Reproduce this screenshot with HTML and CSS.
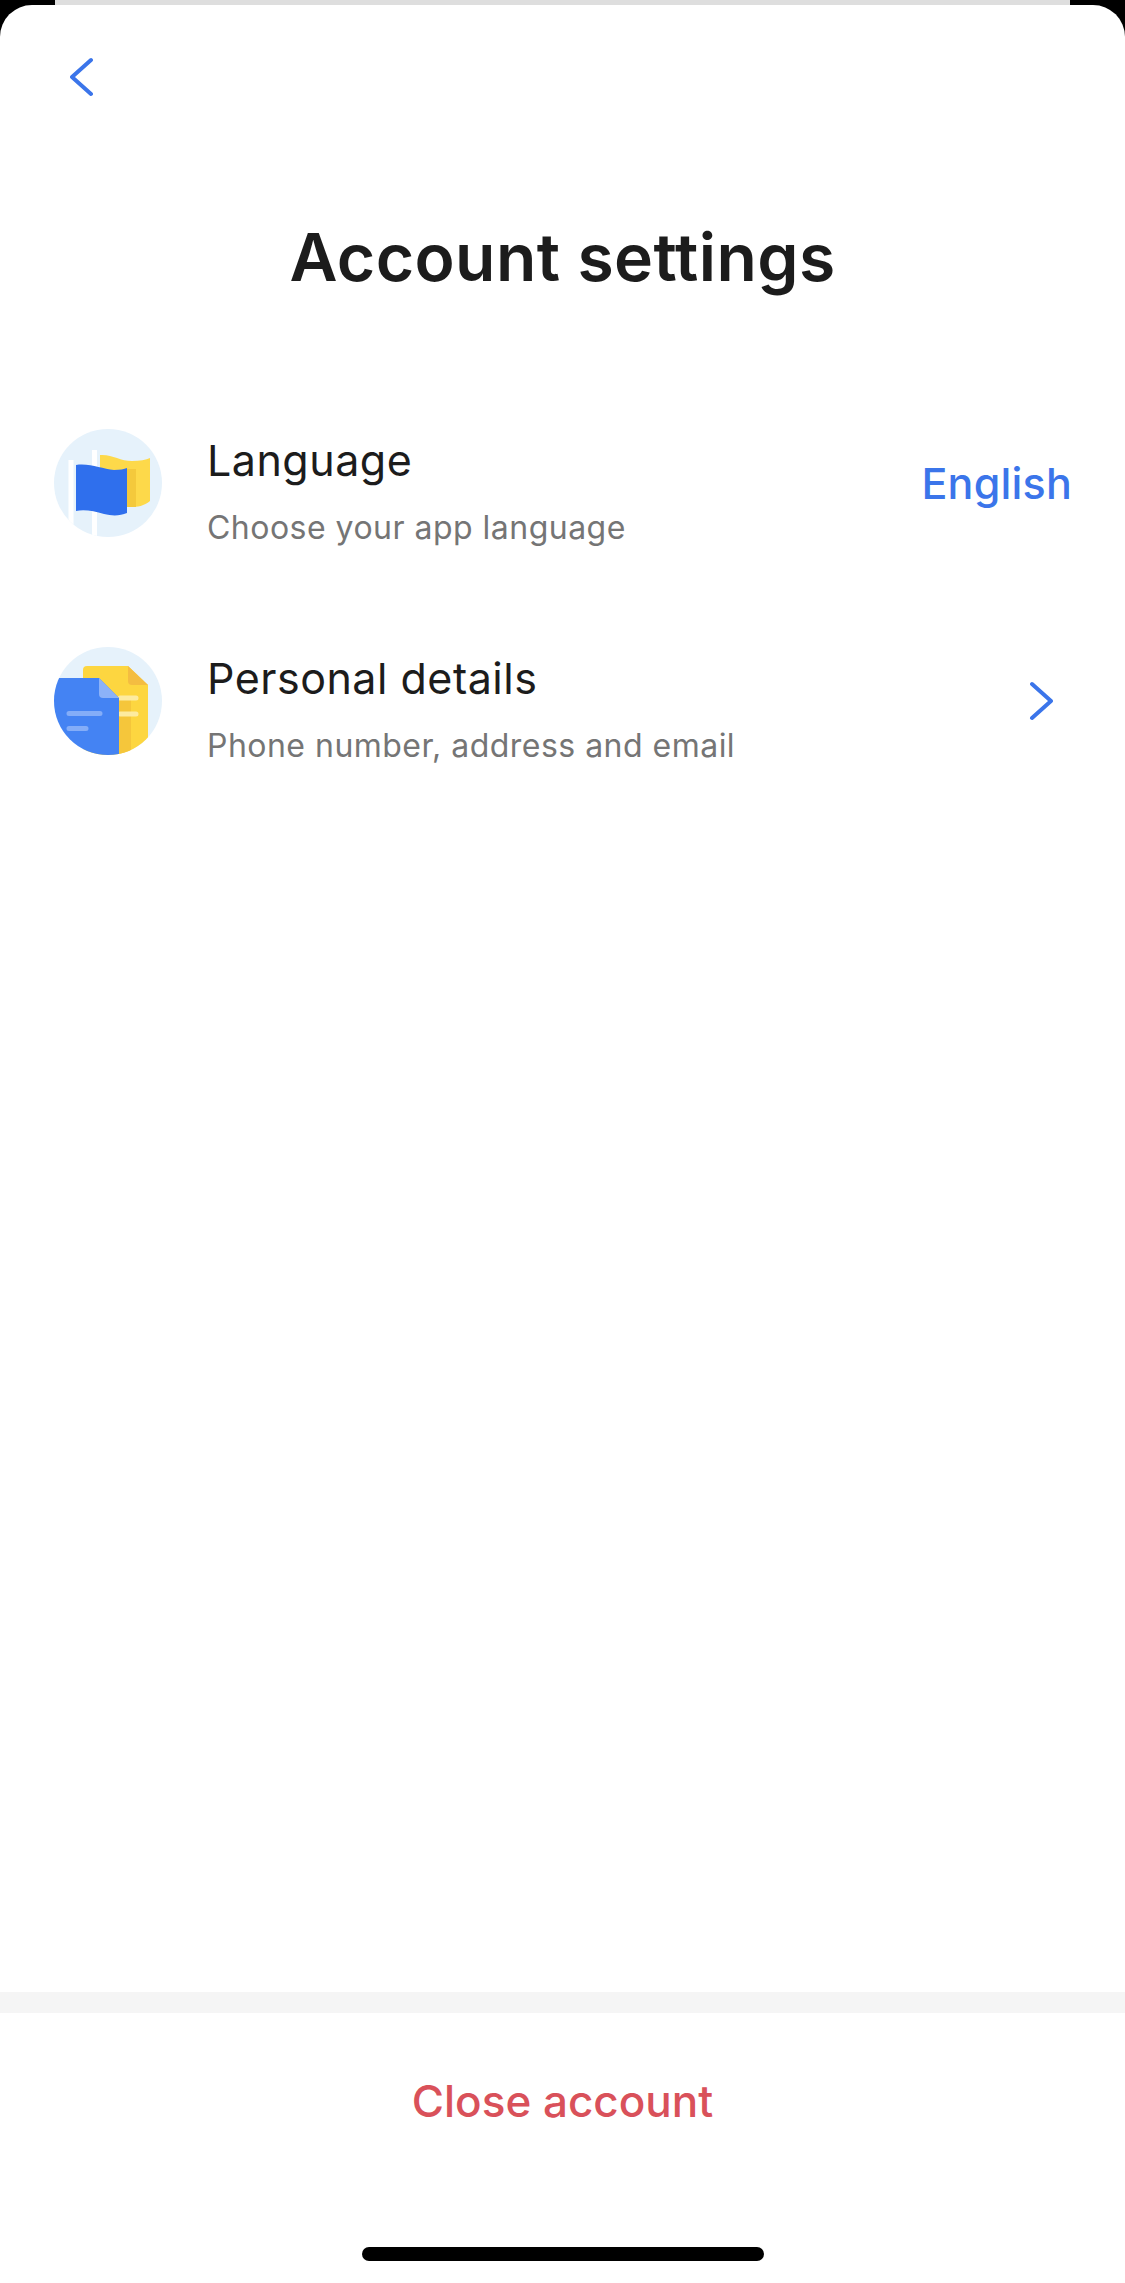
FILE: index.html
```html
<!DOCTYPE html>
<html lang="en">
<head>
<meta charset="utf-8">
<title>Account settings</title>
<link rel="stylesheet" href="styles.css">
</head>
<body>
<div class="screen">
  <div class="status-strip"></div>
  <main class="sheet">
    <header class="nav">
      <svg class="chevron-back" width="24" height="40" viewBox="0 0 24 40"><path d="M21 3 L2 20 L21 37" fill="none" stroke="#3b75ea" stroke-width="4" stroke-linecap="round" stroke-linejoin="round"/></svg>
    </header>
    <h1 class="title">Account settings</h1>
    <section class="list">
      <div class="row">
        <svg class="icon" width="108" height="108" viewBox="0 0 108 108">
          <defs><clipPath id="c1"><circle cx="54" cy="54" r="54"/></clipPath></defs>
          <circle cx="54" cy="54" r="54" fill="#e6f2fb"/>
          <g clip-path="url(#c1)">
            <rect x="14.5" y="31" width="5" height="77" fill="#fff"/>
            <rect x="38" y="21" width="5" height="87" fill="#fff"/>
            <path d="M46 26 C58 25 66 32 78 32 C86 32 92 31 96 29 V72 C90 77 84 78 76 78 L46 72 Z" fill="#fdd94a"/>
            <path d="M72 40 H82 V78 C78 78 75 78 72 78 Z" fill="#f4c93c"/>
            <path d="M22 36 C36 34 48 40 60 41 C66 41 70 40 73 39 V84 C66 87 58 87 50 85 C40 82 30 80 22 82 Z" fill="#2f6fed"/>
          </g>
        </svg>
        <div class="text">
          <div class="row-title">Language</div>
          <div class="row-sub">Choose your app language</div>
        </div>
        <div class="value">English</div>
      </div>
      <div class="row">
        <svg class="icon" width="108" height="108" viewBox="0 0 108 108">
          <defs><clipPath id="c2"><circle cx="54" cy="54" r="54"/></clipPath></defs>
          <circle cx="54" cy="54" r="54" fill="#e6f2fb"/>
          <g clip-path="url(#c2)">
            <path d="M33 19 H74 L94 38 V108 H29 V23 Q29 19 33 19 Z" fill="#fdd640"/>
            <path d="M74 19 L94 38 H78 Q74 38 74 34 Z" fill="#f4bd41"/>
            <rect x="65" y="50" width="12" height="58" fill="#f5c63b"/>
            <path d="M66 51 H82 M66 67 H82" stroke="#fdeba0" stroke-width="5" stroke-linecap="round"/>
            <path d="M-2 31 H45 L65 51 V108 H-2 Z" fill="#4483f3"/>
            <path d="M45 31 L65 51 H49 Q45 51 45 47 Z" fill="#8cb2f8"/>
            <path d="M15 66.5 H46 M15 81.5 H32" stroke="#84adf8" stroke-width="5" stroke-linecap="round"/>
          </g>
        </svg>
        <div class="text">
          <div class="row-title">Personal details</div>
          <div class="row-sub">Phone number, address and email</div>
        </div>
        <svg class="chevron-next" width="24" height="40" viewBox="0 0 24 40"><path d="M3 3 L22 20 L3 37" fill="none" stroke="#3b75ea" stroke-width="4" stroke-linecap="round" stroke-linejoin="round"/></svg>
      </div>
    </section>
    <div class="spacer"></div>
    <div class="band"></div>
    <footer class="footer">
      <div class="close">Close account</div>
      <div class="home-bar"></div>
    </footer>
  </main>
</div>
</body>
</html>
```

FILE: styles.css
```css
html, body {
  margin: 0;
  padding: 0;
  background: #000;
}
.screen {
  width: 1125px;
  height: 2283px;
  display: flex;
  flex-direction: column;
  background: #000;
  font-family: Inter, "Liberation Sans", sans-serif;
  overflow: hidden;
}
.status-strip {
  height: 5px;
  margin: 0 55px;
  background: #dedede;
  flex: none;
}
.sheet {
  flex: 1;
  display: flex;
  flex-direction: column;
  background: #fff;
  border-radius: 32px 32px 0 0;
}
.nav {
  height: 212px;
  padding: 52px 0 0 70px;
  box-sizing: border-box;
  flex: none;
}
.chevron-back { display: block; }
.title {
  margin: 0;
  height: 80px;
  line-height: 80px;
  text-align: center;
  font-size: 66px;
  font-weight: 600;
  color: #1c1c1c;
  letter-spacing: 0.4px;
}
.list {
  margin-top: 132px;
  display: flex;
  flex-direction: column;
  gap: 110px;
}
.row {
  display: flex;
  align-items: center;
  height: 108px;
  padding-left: 54px;
}
.icon { flex: none; }
.text {
  flex: 1;
  margin-left: 45px;
  padding-top: 15px;
}
.row-title {
  font-size: 43px;
  line-height: 50px;
  letter-spacing: 0.5px;
  color: #1c1c1c;
}
.row-sub {
  margin-top: 24px;
  font-size: 32px;
  line-height: 38px;
  letter-spacing: 0.48px;
  color: #757575;
}
.value {
  margin-right: 53px;
  font-size: 43px;
  font-weight: 500;
  letter-spacing: 0.2px;
  color: #3b75ea;
}
.chevron-next {
  margin-right: 72px;
  flex: none;
}
.spacer { flex: 1; }
.band {
  height: 21px;
  background: #f5f5f5;
  flex: none;
}
.footer {
  height: 270px;
  display: flex;
  flex-direction: column;
  align-items: center;
  flex: none;
}
.close {
  margin-top: 60px;
  font-size: 44px;
  line-height: 56px;
  font-weight: 500;
  color: #d9515a;
}
.home-bar {
  margin-top: 118px;
  width: 402px;
  height: 14px;
  border-radius: 7px;
  background: #000;
}
```
